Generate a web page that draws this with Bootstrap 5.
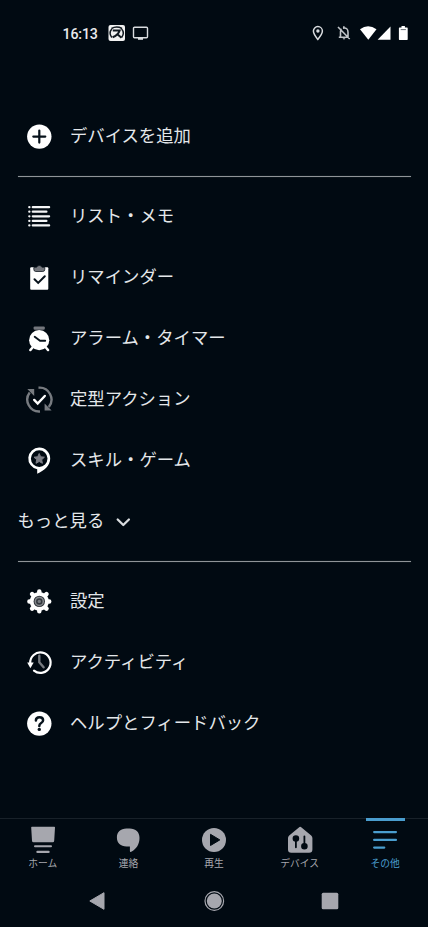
<!DOCTYPE html>
<html lang="ja">
<head>
<meta charset="utf-8">
<meta name="viewport" content="width=device-width, initial-scale=1">
<title>その他</title>
<link href="https://cdn.jsdelivr.net/npm/bootstrap@5.3.0/dist/css/bootstrap.min.css" rel="stylesheet">
<style>
  :root { --ink:#010a12; --text:#e4e7ea; --dim:#a6a7ae; --accent:#4a9dce; }
  body { background:var(--ink); color:var(--text); font-family:"Noto Sans CJK JP",sans-serif; height:927px; overflow:hidden; }
  svg { display:block; flex:none; }
  .statusbar { height:66px; padding-left:62.5px; padding-right:19px; }
  .clock { font:500 14.2px/20px Roboto,sans-serif; width:35.5px; padding-top:1px; letter-spacing:-.15px; white-space:nowrap; color:#e9ebed; }
  .menu { padding-top:40px; height:752px; }
  .menu-item { height:61px; padding-left:24px; font-size:17.35px; line-height:26px; color:var(--text); gap:15px; }
  .menu-item:hover { color:#fff; }
  .menu-more { padding-left:17.5px; gap:10.5px; }
  .menu-item span { margin-top:-4px; white-space:nowrap; }
  .rule { height:1px; margin:9px 17px 9px 18px; background:#8f9498; box-shadow:0 0 1px #61666b; }
  .tabs { height:58px; border-top:1px solid #182129; }
  .tab { width:20%; color:var(--dim); font-size:9.75px; line-height:14px; padding-top:6px; position:relative; }
  .tab span { margin-top:1px; white-space:nowrap; }
  .tab.active { color:var(--accent); }
  .tab.active::before { content:""; position:absolute; top:-1px; left:calc(50% - 19px); width:39px; height:2.5px; background:var(--accent); }
  .sysnav { height:49px; padding:0 86px 0 85px; }
</style>
</head>
<body class="d-flex flex-column">
<header class="statusbar d-flex align-items-center">
  <div class="clock">16:13</div>
  <svg class="ms-2" width="50" height="20" viewBox="0 0 50 20">
    <rect x="2.500" y="2" width="16.500" height="16" rx="2" fill="#f2f2f2"/>
    <path d="M5.800 14.500q-3.500-4.500 0-8.500M15.600 14.500q3.500-4.500 0-8.500M5.500 5.500q5-2.800 10.500 0" fill="none" stroke="#111920" stroke-width="1.500"/>
    <path d="M6.800 7.600h6.800q-1.500 4.500-7 6.700M10.800 10.800l4.700 4" fill="none" stroke="#111920" stroke-width="2"/>
    <path d="M28.500 4.200h12a1 1 0 0 1 1 1v8.600a1 1 0 0 1-1 1h-12a1 1 0 0 1-1-1V5.200a1 1 0 0 1 1-1z" fill="none" stroke="#d9dcdf" stroke-width="1.400"/>
    <path d="M32 14.800h5v2h-5z" fill="#d9dcdf"/>
  </svg>
  <svg class="ms-auto" width="98" height="20" viewBox="0 0 98 20">
    <path d="M6.800 16.400C3.800 12.800 2.400 10.300 2.400 8.100a4.500 4.500 0 0 1 9 0c0 2.200-1.500 4.700-4.600 8.300z" fill="none" stroke="#d9dcdf" stroke-width="1.500"/>
    <circle cx="6.900" cy="8" r="1.700" fill="#d9dcdf"/>
    <path d="M29.500 13.500V8.700q0-2 1-2.800M32 5.200q5-.9 5 4v4.500M27.800 14.200h10M27 4l11.700 12" fill="none" stroke="#bfc3c7" stroke-width="1.600"/>
    <path d="M32 3.200h1.700v2H32zM31.500 15.200h3l-1.500 1.500z" fill="#bfc3c7"/>
    <path d="M49 6.300q8-6.300 16.500 0L57.300 16.800z" fill="#fff"/>
    <path d="M79.500 3.500v13.300H66.600z" fill="#fff"/>
    <path d="M88.500 4.500h2V3h3.400v1.500h2.200q.6 0 .6.700v11q0 .7-.6.700h-7.600q-.6 0-.6-.7v-11q0-.7.600-.7z" fill="#fff"/>
    <path d="M89.700 6.600h5.200" stroke="#697077" stroke-width="1"/>
  </svg>
</header>

<main class="menu">
  <a href="#" class="menu-item d-flex align-items-center text-decoration-none">
    <svg width="31" height="31" viewBox="0 0 31 31"><circle cx="15.300" cy="15.600" r="12.200" fill="#fff"/><path d="M15.300 9.600v12M9.300 15.600h12" stroke="#07121b" stroke-width="2.200" stroke-linecap="round"/></svg>
    <span>デバイスを追加</span></a>
  <div class="rule"></div>
  <a href="#" class="menu-item d-flex align-items-center text-decoration-none">
    <svg width="31" height="31" viewBox="0 0 31 31" fill="none" stroke="#f4f5f6" stroke-width="2.300" stroke-linecap="round"><path d="M5.300 6.200h.1M5.300 10.700h.1M5.300 15.300h.1M5.300 19.900h.1M5.300 24.400h.1"/><path d="M8.800 6.200h16.300M8.800 10.700h13.600M8.800 15.300h16.300M8.800 19.900h13.600M8.800 24.400h16.300"/></svg>
    <span>リスト・メモ</span></a>
  <a href="#" class="menu-item d-flex align-items-center text-decoration-none">
    <svg width="31" height="31" viewBox="0 0 31 31"><rect x="6.200" y="5.300" width="18.100" height="22.500" rx="1" fill="#fff"/><path d="M9.800 5.500h2.700q.6-2 2.800-2t2.800 2h2.700v1.800q0 2.200-2 2.200h-7q-2 0-2-2.200z" fill="#74777d" stroke="#111a22" stroke-width=".8"/><path d="M10.500 17.200l3.700 3.700 6.600-6.700" fill="none" stroke="#07121b" stroke-width="2" stroke-linecap="round"/></svg>
    <span>リマインダー</span></a>
  <a href="#" class="menu-item d-flex align-items-center text-decoration-none">
    <svg width="31" height="31" viewBox="0 0 31 31"><rect x="9.600" y="3.400" width="11.200" height="3.300" rx="1.200" fill="#74777d"/><circle cx="15.200" cy="17.200" r="10.100" fill="#fff"/><path d="M8.500 24.500l-2.200 2.600M21.900 24.500l2.200 2.600" stroke="#fff" stroke-width="2.400" stroke-linecap="round"/><path d="M10.700 13.700l5.300 4h5.200" fill="none" stroke="#07121b" stroke-width="1.900" stroke-linecap="round" stroke-linejoin="round"/></svg>
    <span>アラーム・タイマー</span></a>
  <a href="#" class="menu-item d-flex align-items-center text-decoration-none">
    <svg width="31" height="31" viewBox="0 0 31 31"><g fill="none" stroke="#777b80" stroke-width="2.400"><path d="M14.500 3.700A11.900 11.900 0 0 1 24.800 23"/><path d="M16 27.500A11.900 11.900 0 0 1 5.700 8.500"/></g><path d="M3.300 5h6.900v6.900zM20.600 19.500v7.100h7z" fill="#777b80"/><path d="M10.200 15.900l3.500 3.700 7.100-7.600" fill="none" stroke="#fff" stroke-width="2.400" stroke-linecap="round"/></svg>
    <span>定型アクション</span></a>
  <a href="#" class="menu-item d-flex align-items-center text-decoration-none">
    <svg width="31" height="31" viewBox="0 0 31 31"><path fill-rule="evenodd" fill="#fff" d="M15.200 2.500A11 11 0 0 1 26.200 13.500C26.200 20.800 20 25.500 13.200 28.800V24.300A11 11 0 0 1 15.200 2.500zM15.200 5.300a8.300 8.300 0 1 0 0 16.600a8.300 8.300 0 0 0 0-16.600z"/><path d="M15.200 8.500l1.500 3.300 3.700.4-2.700 2.500.7 3.600-3.200-1.800-3.200 1.800.7-3.600-2.700-2.500 3.700-.4z" fill="#7d7e86" stroke="#7d7e86" stroke-linejoin="round"/></svg>
    <span>スキル・ゲーム</span></a>
  <a href="#" class="menu-item menu-more d-flex align-items-center text-decoration-none">
    <span>もっと見る</span>
    <svg width="16" height="16" viewBox="0 0 16 16"><path d="M2.700 5.500l5.600 5.500 5.600-5.500" fill="none" stroke="#d9dcdf" stroke-width="2.300" stroke-linecap="round" stroke-linejoin="round"/></svg></a>
  <div class="rule"></div>
  <a href="#" class="menu-item d-flex align-items-center text-decoration-none">
    <svg width="31" height="31" viewBox="0 0 31 31"><circle cx="15.300" cy="15.400" r="9.500" fill="#fff"/><g stroke="#fff" stroke-width="4.500" stroke-linecap="round"><path d="M15.300 5.500v19.800M5.400 15.400h19.800M8.100 8.200l14.400 14.400M22.500 8.200L8.100 22.600"/></g><circle cx="15.300" cy="15.400" r="5.700" fill="#33383e"/><circle cx="15.300" cy="15.400" r="4" fill="none" stroke="#84878b" stroke-width="1.500"/><circle cx="15.300" cy="15.400" r="1.700" fill="#777b80"/></svg>
    <span>設定</span></a>
  <a href="#" class="menu-item d-flex align-items-center text-decoration-none">
    <svg width="31" height="31" viewBox="0 0 31 31"><path d="M6.200 16.200A10.200 10.200 0 1 1 10 23.600" fill="none" stroke="#fff" stroke-width="2.200" stroke-linecap="round"/><path d="M3.200 15.600h6.500l-3.300 5.600z" fill="#fff"/><path d="M15.300 8.800v6.500l4.300 5" fill="none" stroke="#777b80" stroke-width="2.400" stroke-linecap="round" stroke-linejoin="round"/></svg>
    <span>アクティビティ</span></a>
  <a href="#" class="menu-item d-flex align-items-center text-decoration-none">
    <svg width="31" height="31" viewBox="0 0 31 31"><circle cx="15.300" cy="15.600" r="12.200" fill="#fff"/><path d="M11.900 12.600q0-3.400 3.600-3.400t3.600 3q0 1.700-1.900 2.800t-1.900 2.900" fill="none" stroke="#07121b" stroke-width="2.500" stroke-linecap="round"/><circle cx="15.300" cy="21.400" r="1.700" fill="#07121b"/></svg>
    <span>ヘルプとフィードバック</span></a>
</main>

<nav class="tabs d-flex flex-shrink-0">
  <a href="#" class="tab d-flex flex-column align-items-center text-decoration-none">
    <svg width="30" height="30" viewBox="0 0 30 30" fill="currentColor"><path d="M3.900 1.700h22.400q.8 0 .7.900l-.8 13.200q-.1 1.500-1.500 1.500H5.500q-1.400 0-1.500-1.500L3.200 2.600q-.1-.9.700-.9z"/><rect x="6" y="20.200" width="18" height="2" rx="1"/><rect x="8.300" y="25.800" width="13.400" height="2.300" rx="1.100"/></svg>
    <span>ホーム</span></a>
  <a href="#" class="tab d-flex flex-column align-items-center text-decoration-none">
    <svg width="30" height="30" viewBox="0 0 30 30" fill="currentColor"><path d="M13.500 3.500h3.200c6 0 9.800 3.600 9.800 9.200 0 6.600-3 11.200-8.300 14.100-.7.400-1.300.1-1.300-.7v-4.600h-3.400C7.500 21.500 3.900 18.200 3.900 12.600S7.500 3.500 13.500 3.500z"/></svg>
    <span>連絡</span></a>
  <a href="#" class="tab d-flex flex-column align-items-center text-decoration-none">
    <svg width="30" height="30" viewBox="0 0 30 30"><circle cx="15" cy="14.900" r="12" fill="currentColor"/><path d="M11.500 9.300v11.200l9.300-5.600z" fill="#010a12" stroke="#010a12" stroke-linejoin="round"/></svg>
    <span>再生</span></a>
  <a href="#" class="tab d-flex flex-column align-items-center text-decoration-none">
    <svg width="30" height="30" viewBox="0 0 30 30"><path d="M15.900 2.100l10.300 8.300q1.200 1 1.200 2.500v11.600q0 3.300-3.300 3.300H6.300Q3 27.800 3 24.500V12.900q0-1.500 1.200-2.500l10.300-8.300q.7-.6 1.400 0z" fill="currentColor"/><g fill="#010a12" stroke="#010a12" stroke-width="1.800"><path d="M10.900 13v9.300M19.400 11.300v9.500" stroke-linecap="round"/><circle cx="10.900" cy="13.500" r="2.400"/><circle cx="19.400" cy="21.200" r="2.400"/></g></svg>
    <span>デバイス</span></a>
  <a href="#" class="tab active d-flex flex-column align-items-center text-decoration-none">
    <svg width="30" height="30" viewBox="0 0 30 30" fill="none" stroke="currentColor" stroke-width="2.100" stroke-linecap="round"><path d="M4.100 7.100h21.900M4.100 14.900h21.900M4.100 22.600h10.200"/></svg>
    <span>その他</span></a>
</nav>
<footer class="sysnav d-flex align-items-center justify-content-between">
  <svg width="24" height="24" viewBox="0 0 24 24"><path d="M19 3.700v16.600L4.800 12z" fill="#a6a7ae" stroke="#a6a7ae" stroke-linejoin="round"/></svg>
  <svg width="24" height="24" viewBox="0 0 24 24"><circle cx="12.300" cy="12" r="9.300" fill="none" stroke="#a6a7ae" stroke-width="1.200"/><circle cx="12.300" cy="12" r="7.500" fill="#a6a7ae"/></svg>
  <svg width="24" height="24" viewBox="0 0 24 24"><rect x="3.700" y="3.700" width="16.600" height="16.600" rx="1.500" fill="#a6a7ae"/></svg>
</footer>
<script src="https://cdn.jsdelivr.net/npm/bootstrap@5.3.0/dist/js/bootstrap.bundle.min.js"></script>
</body>
</html>
